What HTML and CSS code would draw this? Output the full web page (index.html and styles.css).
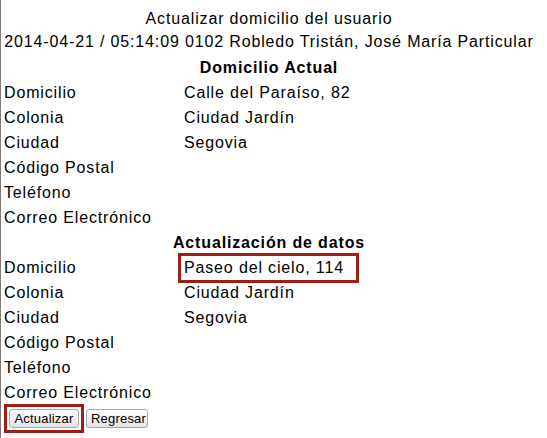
FILE: index.html
```html
<!DOCTYPE html>
<html lang="es">
<head>
<meta charset="utf-8">
<title>Actualizar domicilio del usuario</title>
<link rel="stylesheet" href="styles.css">
</head>
<body>
<div class="page">
  <div class="title">Actualizar domicilio del usuario</div>
  <div class="subtitle">2014-04-21 / 05:14:09 0102 Robledo Tristán, José María Particular</div>

  <div class="section">
    <div class="heading">Domicilio Actual</div>
    <div class="row"><span class="label">Domicilio</span><span class="value">Calle del Paraíso, 82</span></div>
    <div class="row"><span class="label">Colonia</span><span class="value">Ciudad Jardín</span></div>
    <div class="row"><span class="label">Ciudad</span><span class="value">Segovia</span></div>
    <div class="row"><span class="label">Código Postal</span><span class="value"></span></div>
    <div class="row"><span class="label">Teléfono</span><span class="value"></span></div>
    <div class="row"><span class="label">Correo Electrónico</span><span class="value"></span></div>
  </div>

  <div class="section">
    <div class="heading">Actualización de datos</div>
    <div class="row"><span class="label">Domicilio</span><span class="value marked">Paseo del cielo, 114<span class="mark"></span></span></div>
    <div class="row"><span class="label">Colonia</span><span class="value">Ciudad Jardín</span></div>
    <div class="row"><span class="label">Ciudad</span><span class="value">Segovia</span></div>
    <div class="row"><span class="label">Código Postal</span><span class="value"></span></div>
    <div class="row"><span class="label">Teléfono</span><span class="value"></span></div>
    <div class="row"><span class="label">Correo Electrónico</span><span class="value"></span></div>
  </div>

  <div class="actions">
    <span class="btn-mark"><button class="btn" type="button">Actualizar</button></span>
    <button class="btn btn-back" type="button">Regresar</button>
  </div>
</div>
</body>
</html>
```
FILE: styles.css
```css
html, body {
  margin: 0;
  height: 100%;
}
body {
  background: #ffffff;
  border-left: 1px solid #7c7c74;
  box-sizing: border-box;
  font-family: "Liberation Sans", Arial, sans-serif;
  font-size: 16px;
  letter-spacing: 0.85px;
  color: #000000;
}
.page {
  width: 530px;
  padding: 7px 0 0 3px;
}
.title, .subtitle {
  text-align: center;
  line-height: 23px;
  white-space: nowrap;
}
.subtitle {
  margin-bottom: 2px;
}
.heading {
  text-align: center;
  font-weight: bold;
  line-height: 25px;
}
.row {
  display: flex;
  line-height: 25px;
  height: 25px;
}
.label {
  width: 180px;
  flex: none;
}
.value {
  flex: 1;
}
.marked {
  position: relative;
}
.mark {
  position: absolute;
  left: -6px;
  top: -2px;
  width: 181px;
  height: 30px;
  box-sizing: border-box;
  border: 3px solid #9e1d15;
}
.actions {
  display: flex;
  align-items: center;
  margin-top: -1px;
}
.btn-mark {
  display: inline-flex;
  border: 3px solid #9e1d15;
  padding: 2px;
}
.btn {
  font-family: "Liberation Sans", Arial, sans-serif;
  font-size: 13px;
  letter-spacing: 0.2px;
  color: #000;
  height: 19px;
  padding: 0 4px;
  margin: 0;
  border: 1px solid #a9a9a9;
  border-radius: 3px;
  background: linear-gradient(#ffffff, #f1f1f1 50%, #e4e4e4);
  line-height: 17px;
}
.btn-mark .btn {
  width: 70px;
}
.btn-back {
  width: 62px;
  margin-left: 2px;
}
```
